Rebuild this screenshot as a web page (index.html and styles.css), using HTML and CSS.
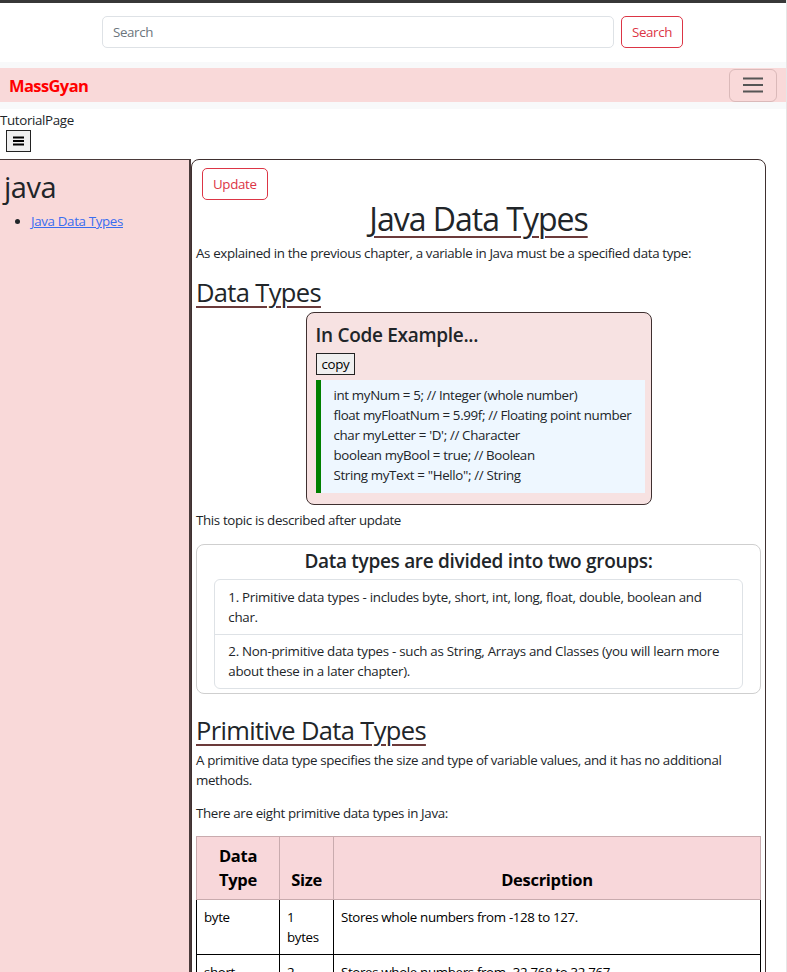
FILE: index.html
```html
<!DOCTYPE html>
<html lang="en">
<head>
<meta charset="utf-8">
<title>MassGyan - Java Data Types</title>
<link rel="stylesheet" href="styles.css">
</head>
<body>
<div class="page">
  <div class="topline"></div>
  <form class="search">
    <input class="search-input" type="text" placeholder="Search">
    <button class="btn btn-outline" type="button">Search</button>
  </form>
  <nav class="navwrap">
    <div class="navbar">
      <a class="brand" href="#">MassGyan</a>
      <button class="toggler" type="button" aria-label="menu">
        <svg width="22" height="16" viewBox="0 0 22 16"><path d="M1 1.5h20M1 8h20M1 14.5h20" stroke="#555" stroke-width="2" fill="none"/></svg>
      </button>
    </div>
  </nav>
  <div class="tp">TutorialPage</div>
  <button class="menu-btn" type="button" aria-label="open menu">
    <svg width="11" height="10" viewBox="0 0 11 10"><path d="M0 1.5h11M0 5h11M0 8.5h11" stroke="#000" stroke-width="2" fill="none"/></svg>
  </button>
  <div class="layout">
    <aside class="sidebar">
      <h1 class="side-title">java</h1>
      <ul class="side-list">
        <li><a href="#">Java Data Types</a></li>
      </ul>
    </aside>
    <main class="content">
      <button class="btn btn-outline update" type="button">Update</button>
      <h1 class="title">Java Data Types</h1>
      <p>As explained in the previous chapter, a variable in Java must be a specified data type:</p>
      <h2 class="sub">Data Types</h2>
      <div class="code-card">
        <h4 class="code-title">In Code Example...</h4>
        <button class="copy" type="button">copy</button>
        <div class="code">
          <div>int myNum = 5; // Integer (whole number)</div>
          <div>float myFloatNum = 5.99f; // Floating point number</div>
          <div>char myLetter = 'D'; // Character</div>
          <div>boolean myBool = true; // Boolean</div>
          <div>String myText = "Hello"; // String</div>
        </div>
      </div>
      <p class="after">This topic is described after update</p>
      <div class="groups">
        <h4 class="groups-title">Data types are divided into two groups:</h4>
        <ul class="list-group">
          <li>1. Primitive data types - includes byte, short, int, long, float, double, boolean and char.</li>
          <li>2. Non-primitive data types - such as String, Arrays and Classes (you will learn more about these in a later chapter).</li>
        </ul>
      </div>
      <h2 class="sub">Primitive Data Types</h2>
      <p>A primitive data type specifies the size and type of variable values, and it has no additional methods.</p>
      <p class="before-table">There are eight primitive data types in Java:</p>
      <table class="types">
        <thead>
          <tr><th class="c1">Data Type</th><th class="c2">Size</th><th>Description</th></tr>
        </thead>
        <tbody>
          <tr><td>byte</td><td>1 bytes</td><td>Stores whole numbers from -128 to 127.</td></tr>
          <tr><td>short</td><td>2 bytes</td><td>Stores whole numbers from -32,768 to 32,767</td></tr>
          <tr><td>int</td><td>4 bytes</td><td>Stores whole numbers from -2,147,483,648 to 2,147,483,647</td></tr>
        </tbody>
      </table>
    </main>
  </div>
</div>
</body>
</html>
```
FILE: styles.css
```css
* { box-sizing: border-box; }
html, body { margin: 0; padding: 0; background: #fff; }
body {
  font-family: "Open Sans", "Noto Sans", sans-serif;
  font-size: 13.33px;
  line-height: 20px;
  letter-spacing: -0.35px;
  color: #212529;
  overflow: hidden;
}
.page {
  border-right: 1px solid #e6e6e6;
  min-height: 972px;
}
.topline { height: 3px; background: #383838; }

.search {
  display: flex;
  justify-content: center;
  gap: 7px;
  margin: 13px 0 0;
  padding-right: 1px;
}
.search-input {
  width: 512px;
  height: 32px;
  border: 1px solid #dee2e6;
  border-radius: 5px;
  padding: 0 10px;
  font: inherit;
  letter-spacing: -0.35px;
  color: #212529;
}
.search-input::placeholder { color: #6c757d; }
.btn {
  font: inherit;
  letter-spacing: -0.35px;
  height: 32px;
  padding: 0 10px;
  border-radius: 5px;
  background: #fff;
  cursor: pointer;
}
.btn-outline { border: 1px solid #dc3545; color: #dc3545; }

.navwrap {
  margin-top: 14px;
  background: #f8f9fa;
  padding: 6px 0 7px;
}
.navbar {
  background: #f9d9d9;
  height: 34px;
  display: flex;
  align-items: center;
  justify-content: space-between;
  padding: 0 9px;
}
.brand {
  color: #ff0000;
  font-weight: 700;
  font-size: 16.5px;
  line-height: 22px;
  padding-top: 2px;
  letter-spacing: -0.6px;
  text-decoration: none;
}
.toggler {
  width: 48px;
  height: 33px;
  border: 1px solid rgba(80,40,40,0.18);
  border-radius: 6px;
  background: transparent;
  display: flex;
  align-items: center;
  justify-content: center;
  padding: 0;
}

.tp { line-height: 20px; height: 21px; padding-top: 1px; }
.menu-btn {
  display: flex;
  align-items: center;
  justify-content: center;
  margin: 0 0 0 6px;
  width: 25px;
  height: 22px;
  padding: 0;
  border: 1px solid #222;
  background: #efefef;
}

.layout {
  display: flex;
  align-items: stretch;
  margin-top: 7px;
}
.sidebar {
  width: 191px;
  flex: none;
  background: #f9d9d9;
  border-top: 1px solid #4a3a3a;
  border-right: 2px solid #4a3a3a;
  min-height: 820px;
}
.side-title {
  font-size: 29px;
  font-weight: 500;
  line-height: 38px;
  letter-spacing: -0.5px;
  margin: 8px 0 5px 4px;
}
.side-list { margin: 0; padding-left: 31px; }
.side-list a { color: #3a6df0; }

.content {
  width: 575px;
  margin-left: 0;
  border: 1px solid #3f3030;
  border-radius: 8px 8px 0 0;
  padding: 8px 4px 20px;
}
.update { margin-left: 6px; height: 32px; padding: 0 10px; }
h1, h2, h4 { font-weight: 500; color: #212529; }
.title {
  text-align: center;
  font-size: 32px;
  font-weight: 500;
  line-height: 40px;
  letter-spacing: -1px;
  margin: -1px 0 4px;
  text-decoration: underline;
  text-decoration-color: #6b3a3a;
  text-underline-offset: 5px;
  text-decoration-thickness: 2px;
}
p { margin: 0 0 13.33px; }
.sub {
  font-size: 25.5px;
  line-height: 32px;
  letter-spacing: -0.65px;
  margin: 0 0 4px;
  text-decoration: underline;
  text-decoration-color: #6b3a3a;
  text-underline-offset: 4px;
  text-decoration-thickness: 2px;
}
.before-table { margin-bottom: 12.5px; }

.code-card {
  width: 346px;
  margin: 0 auto 5px;
  background: #f7e2e2;
  border: 1px solid #3f3030;
  border-radius: 8px;
  padding: 10px 6px 11px 9px;
}
.code-title {
  font-size: 19px;
  font-weight: 600;
  line-height: 24px;
  letter-spacing: -0.3px;
  margin: 0 0 6px;
}
.copy {
  display: block;
  font: inherit;
  letter-spacing: -0.35px;
  height: 22px;
  padding: 0 5px;
  border: 1px solid #222;
  background: #efefef;
  color: #000;
  margin-bottom: 5px;
}
.code {
  background: #eef7ff;
  border-left: 5px solid #008000;
  padding: 5px 4px 8px 13px;
  white-space: nowrap;
}
.after { margin-bottom: 14px; }

.groups {
  border: 1px solid #cfcfcf;
  border-radius: 8px;
  padding: 4px 17px 4px 17px;
  margin-bottom: 20px;
}
.groups-title {
  text-align: center;
  font-size: 19px;
  font-weight: 600;
  line-height: 24px;
  letter-spacing: -0.3px;
  margin: 0 0 6px;
}
.list-group {
  list-style: none;
  margin: 0;
  padding: 0;
  border: 1px solid #dee2e6;
  border-radius: 6px;
}
.list-group li { padding: 6.67px 13.33px; letter-spacing: -0.28px; }
.list-group li + li { border-top: 1px solid #dee2e6; }

.types {
  width: 100%;
  border-collapse: collapse;
  color: #000;
}
.types th {
  background: #f8d7da;
  border: 1px solid #c9abae;
  font-size: 16.5px;
  font-weight: 700;
  line-height: 24px;
  letter-spacing: -0.3px;
  vertical-align: bottom;
  padding: 7px;
  text-align: center;
}
.types th.c1 { width: 83px; }
.types th.c2 { width: 54px; }
.types td {
  border: 1px solid #000;
  padding: 7px;
  vertical-align: top;
  line-height: 20px;
}
```
